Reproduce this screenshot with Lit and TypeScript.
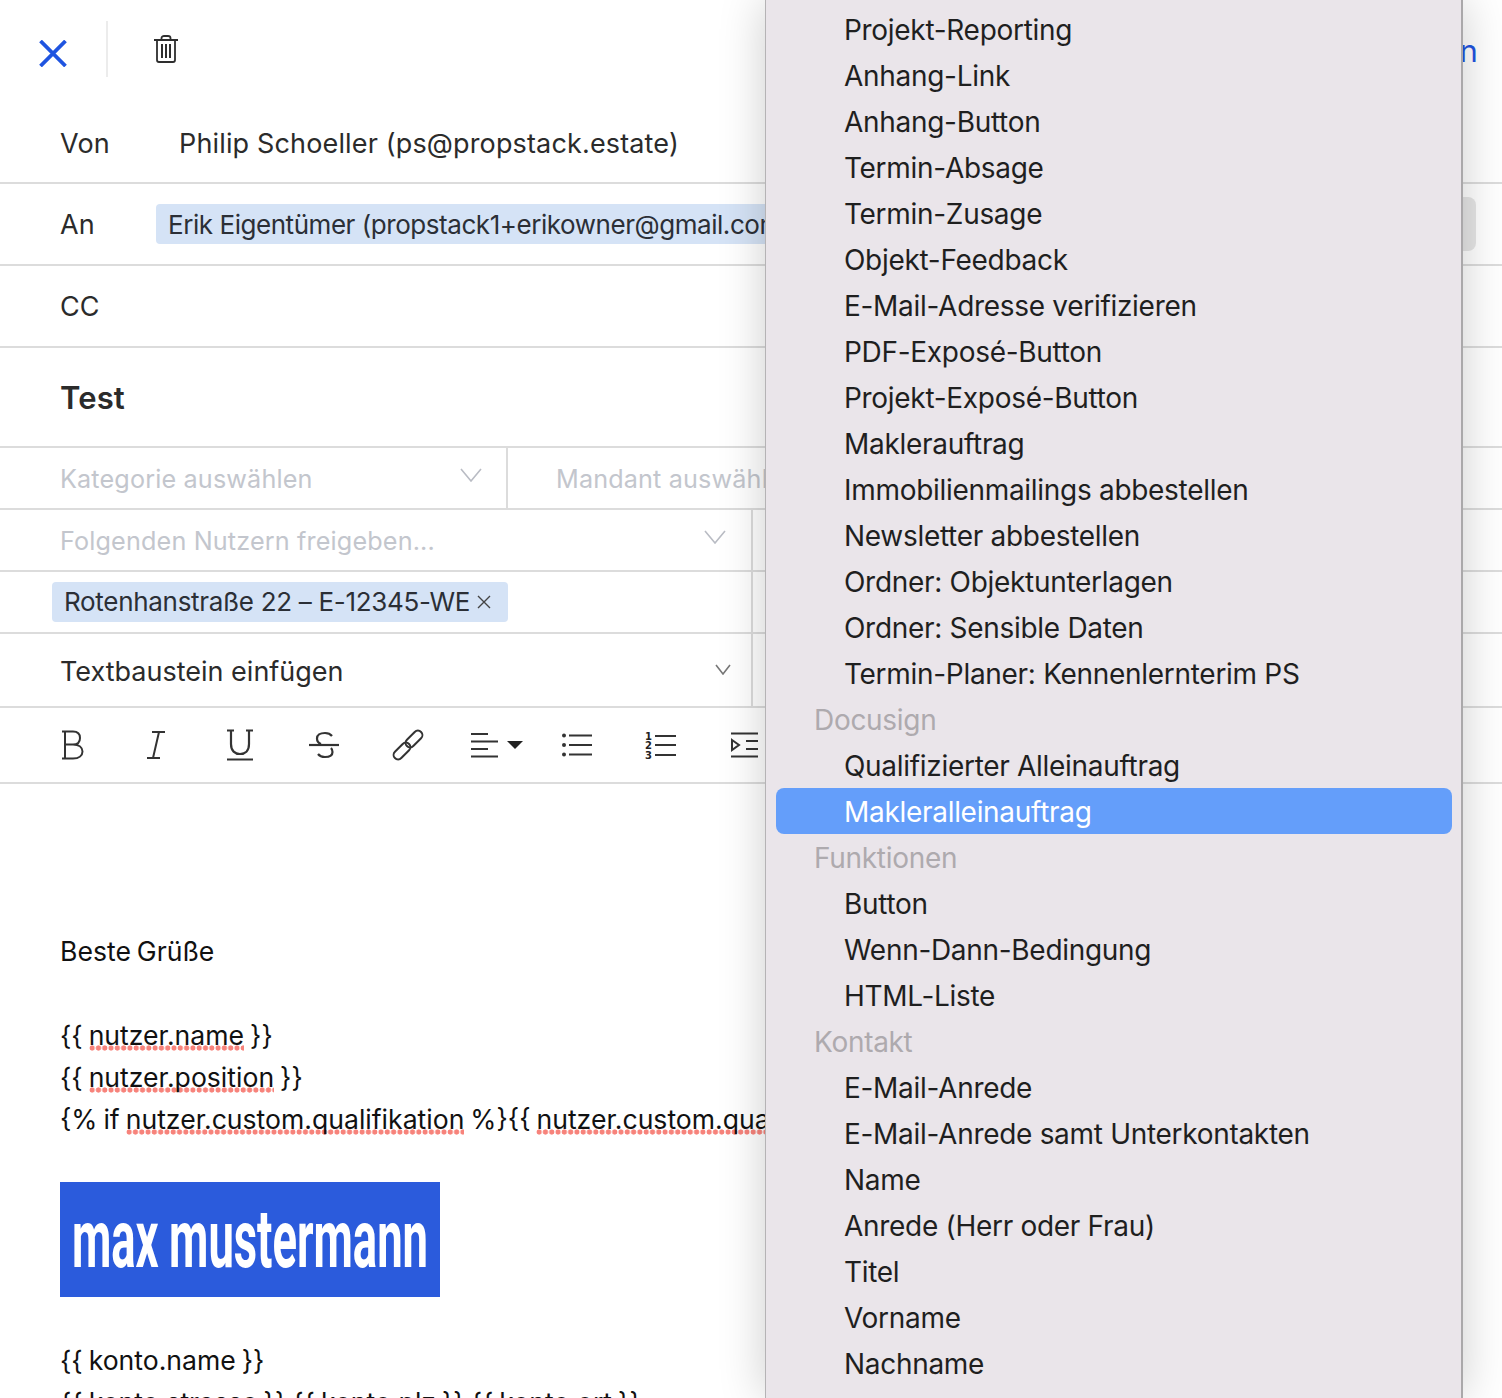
import { LitElement, html, css, svg } from "lit";
import { customElement } from "lit/decorators.js";

const chevron = (w: number, h: number, color: string) => html`<svg width=${w} height=${h} viewBox="0 0 ${w} ${h}" fill="none" stroke=${color} stroke-width="1.6"><path d="M1 1 L${w / 2} ${h - 1} L${w - 1} 1"/></svg>`;

const icon = (w: number, h: number, body: unknown) => html`<svg width=${w} height=${h} viewBox="0 0 ${w} ${h}" fill="none" stroke="#333" stroke-width="2">${body}</svg>`;

type Entry = { t: string; group?: boolean; active?: boolean };
const g = (t: string): Entry => ({ t, group: true });
const i = (t: string): Entry => ({ t });
const menu: Entry[] = [
  i("Projekt-Reporting"), i("Anhang-Link"), i("Anhang-Button"), i("Termin-Absage"), i("Termin-Zusage"),
  i("Objekt-Feedback"), i("E-Mail-Adresse verifizieren"), i("PDF-Exposé-Button"), i("Projekt-Exposé-Button"),
  i("Maklerauftrag"), i("Immobilienmailings abbestellen"), i("Newsletter abbestellen"),
  i("Ordner: Objektunterlagen"), i("Ordner: Sensible Daten"), i("Termin-Planer: Kennenlernterim PS"),
  g("Docusign"), i("Qualifizierter Alleinauftrag"), { t: "Makleralleinauftrag", active: true },
  g("Funktionen"), i("Button"), i("Wenn-Dann-Bedingung"), i("HTML-Liste"),
  g("Kontakt"), i("E-Mail-Anrede"), i("E-Mail-Anrede samt Unterkontakten"), i("Name"),
  i("Anrede (Herr oder Frau)"), i("Titel"), i("Vorname"), i("Nachname"),
];

@customElement("app-root")
export class AppRoot extends LitElement {
  static styles = css`
    :host { display: block; position: relative; width: 1502px; height: 1398px; overflow: hidden; background: #fff;
      font-family: Inter, "Liberation Sans", sans-serif; font-size: 27px; letter-spacing: .15px; color: #2b2b2b; }
    .top { display: flex; align-items: center; height: 102px; }
    .close { width: 106px; display: flex; justify-content: center; padding-top: 4px; box-sizing: border-box; }
    .vsep { width: 2px; height: 56px; background: #ececec; margin-top: -4px; }
    .trash { margin-left: 46px; margin-top: -4px; display: flex; }
    .send { margin-left: auto; margin-right: 24px; color: #1f54e0; font-size: 31px; margin-top: -2px; }
    .row { display: flex; align-items: center; border-bottom: 2px solid #dcdcdc; box-sizing: border-box; white-space: nowrap; }
    .txt { padding-top: 2px; }
    .h82 { height: 82px; }
    .label { padding-left: 60px; flex: none; width: 96px; }
    .value { color: #2b2b2b; margin-left: 23px; }
    .chip { background: #d5e3f6; border-radius: 4px; height: 40px; line-height: 42px; padding: 0 12px; color: #2b2f36; font-size: 26px; letter-spacing: -.3px; }
    .an-chip { flex: none; letter-spacing: -.45px; }
    .grow { flex: 1; min-width: 0; overflow: hidden; display: flex; }
    .gbtn { flex: none; width: 80px; height: 54px; background: #e6e6e6; border-radius: 8px; margin: 0 26px 0 0; }
    .subject { height: 100px; padding-left: 60px; font-weight: 600; font-size: 31px; }
    .sel { height: 62px; }
    .ph { color: #c3c6cd; font-size: 25.2px; margin-top: 1px; }
    .c1 { width: 508px; flex: none; height: 100%; display: flex; align-items: center; padding: 0 24px 0 60px; box-sizing: border-box; justify-content: space-between; border-right: 2px solid #dcdcdc; }
    .c1 svg { margin-top: -6px; }
    .c2 { padding-left: 48px; }
    .left { width: 753px; flex: none; height: 100%; display: flex; align-items: center; box-sizing: border-box; border-right: 2px solid #dcdcdc; justify-content: space-between; }
    .l1 { padding: 0 25px 0 60px; }
    .l1 svg { margin-top: -6px; }
    .l2 { padding-left: 52px; }
    .tag { display: flex; align-items: center; gap: 7px; padding-right: 17px; }
    .l3 { padding: 0 20px 0 60px; }
    .l3 span { margin-top: 2px; letter-spacing: 0; }
    .l3 svg { margin-top: -2px; }
    .snippet { height: 74px; }
    .tools { height: 76px; padding-left: 30px; }
    .tool { width: 84px; flex: none; display: flex; justify-content: center; align-items: center; }
    .align { display: flex; align-items: center; gap: 9px; margin-left: 9px; }
    .num { font: 700 10px "DejaVu Sans", sans-serif; fill: #222; stroke: none; }
    .content { padding: 146px 0 0 60px; color: #111; font-size: 26.6px; letter-spacing: 0; word-spacing: -1.5px; line-height: 42px; white-space: nowrap; }
    .sp { background: radial-gradient(circle at center, #f7837b 2.3px, transparent 2.9px) repeat-x 0 100% / 6.3px 6px; }
    .logo { display: block; margin: 42px 0 42px 0; width: 380px; height: 115px; }
    .logotext { font-family: Roboto, sans-serif; font-size: 82px; font-weight: 700; fill: #fff; filter: blur(.5px); }
    .menu { position: absolute; top: 0; bottom: 0; left: 765px; width: 698px; box-sizing: border-box; background: #eae5ea;
      border-left: 1px solid #b5b3b5; border-right: 2px solid #aaa8aa; box-shadow: 0 0 44px rgba(0, 0, 0, .2); padding: 6px 9px 0 10px;
      font-family: Inter, sans-serif; font-size: 28px; letter-spacing: -.3px; }
    .mi { height: 46px; line-height: 48px; padding-left: 68px; color: #1f1f1f; border-radius: 8px; white-space: nowrap; }
    .mg { padding-left: 38px; color: #aeaaae; }
    .ma { background: #649efa; color: #fff; }
  `;

  render() {
    const tools = [
      icon(24, 30, svg`<path d="M2 1.500H13C18 1.500 20 4.500 20 8S18 14.500 13 14.500H4M13 14.500C19 14.500 22.500 17.500 22.500 21.500S19 28.500 13 28.500H2M5 1.500V28.500"/>`),
      icon(20, 30, svg`<path d="M6 2H19M1 28H14M13 2L7 28"/>`),
      icon(28, 32, svg`<path d="M1 1.500H8M20 1.500H27M5 1.500V15C5 22 9 25 14 25S23 22 23 15V1.500M1 30.500H27" stroke-width="2.200"/>`),
      icon(32, 28, svg`<path d="M1 14H31" stroke-width="2.200"/><path d="M24 5C22.500 3 20 2 17 2C12 2 9 4 9 7.500C9 10 10.500 12 13 13M23 17C24 18 24.500 19 24.500 21C24.500 24.500 21 26 17 26C14 26 11.500 25 10 23" stroke-width="2.200"/>`),
      icon(34, 34, svg`<rect x="1" y="18.500" width="20" height="9" rx="4.500" transform="rotate(-45 11 23)" stroke-width="2"/><rect x="13" y="6.500" width="20" height="9" rx="4.500" transform="rotate(-45 23 11)" stroke-width="2"/>`),
      html`<span class="align">${icon(27, 26, svg`<path d="M0 2H17M0 9.500H27M0 17H17M0 24.500H27" stroke-width="2"/>`)}<svg width="16" height="8" viewBox="0 0 16 8"><path d="M0 0H16L8 8Z" fill="#222"/></svg></span>`,
      icon(31, 24, svg`<path d="M8 2.500H31M8 12H31M8 21.500H31" stroke-width="2"/><circle cx="3" cy="2.500" r="2" fill="#333" stroke="none"/><circle cx="3" cy="12" r="2" fill="#333" stroke="none"/><circle cx="3" cy="21.500" r="2" fill="#333" stroke="none"/>`),
      icon(31, 28, svg`<path d="M10 5H31M10 14H31M10 24H31" stroke-width="2"/><text class="num" x="0" y="8.500">1</text><text class="num" x="0" y="18">2</text><text class="num" x="0" y="27.500">3</text>`),
      icon(27, 26, svg`<path d="M0 1.500H27M15 9H27M15 17H27M0 24.500H27" stroke-width="2"/><path d="M1 8L8 13L1 18Z" stroke-width="2"/>`),
    ];
    return html`
      <div class="top">
        <div class="close"><svg width="28" height="27" viewBox="0 0 28 27" fill="none" stroke="#1f54e0" stroke-width="3.800"><path d="M1.500 1L26.500 26M26.500 1L1.500 26"/></svg></div>
        <div class="vsep"></div>
        <div class="trash"><svg width="24" height="28" viewBox="0 0 24 28" fill="none" stroke="#2e2e2e" stroke-width="1.800"><path d="M0 5H24M7.500 5V3C7.500 1.500 9 1 10 1H14C15 1 16.500 1.500 16.500 3V5M3 5V25C3 26.300 4 27 5 27H19C20 27 21 26.300 21 25V5"/><path d="M8 9V23M12 9V23M16 9V23" stroke-width="2"/></svg></div>
        <div class="send">Senden</div>
      </div>
      <div class="row h82 txt"><span class="label">Von</span><span class="value">Philip Schoeller (ps@propstack.estate)</span></div>
      <div class="row h82"><span class="label">An</span><div class="grow"><span class="chip an-chip">Erik Eigentümer (propstack1+erikowner@gmail.com)</span></div><div class="gbtn"></div></div>
      <div class="row h82"><span class="label">CC</span></div>
      <div class="row subject">Test</div>
      <div class="row sel"><div class="c1"><span class="ph">Kategorie auswählen</span>${chevron(22, 14, "#b9bcc4")}</div><div class="c2"><span class="ph">Mandant auswählen</span></div></div>
      <div class="row sel"><div class="left l1"><span class="ph">Folgenden Nutzern freigeben...</span>${chevron(22, 14, "#b9bcc4")}</div></div>
      <div class="row sel"><div class="left l2"><span class="chip tag">Rotenhanstraße 22 – E-12345-WE <svg width="14" height="14" viewBox="0 0 14 14" stroke="#444" stroke-width="1.400"><path d="M1 1L13 13M13 1L1 13"/></svg></span></div></div>
      <div class="row snippet"><div class="left l3"><span>Textbaustein einfügen</span>${chevron(16, 11, "#777")}</div></div>
      <div class="row tools">${tools.map((t) => html`<div class="tool">${t}</div>`)}</div>
      <div class="content">
        Beste Grüße<br /><br />
        {{ <span class="sp">nutzer.name</span> }}<br />
        {{ <span class="sp">nutzer.position</span> }}<br />
        {% if <span class="sp">nutzer.custom.qualifikation</span> %}{{ <span class="sp">nutzer.custom.qualifikation</span> }}{% endif %}
        <svg class="logo" viewBox="0 0 380 115"><rect width="380" height="115" fill="#2b5bdc"/><text class="logotext" x="12" y="85" textLength="356" lengthAdjust="spacingAndGlyphs">max mustermann</text></svg>
        {{ konto.name }}<br />
        {{ konto.strasse }} {{ konto.plz }} {{ konto.ort }}
      </div>
      <div class="menu">
        ${menu.map((m) => html`<div class="mi ${m.group ? "mg" : ""} ${m.active ? "ma" : ""}">${m.t}</div>`)}
      </div>
    `;
  }
}
